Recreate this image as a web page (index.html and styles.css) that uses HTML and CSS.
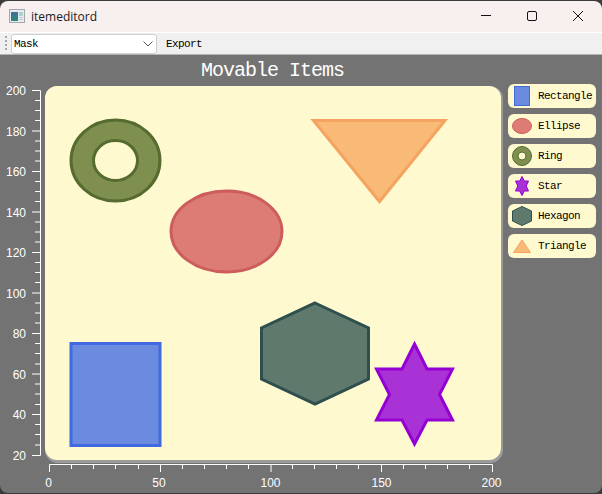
FILE: index.html
```html
<!DOCTYPE html>
<html lang="en">
<head>
<meta charset="utf-8">
<title>itemeditord</title>
<link rel="stylesheet" href="styles.css">
</head>
<body>
<div class="window">
  <header class="titlebar">
    <svg class="app-icon" width="16" height="14" viewBox="0 0 16 14">
      <defs>
        <linearGradient id="app-pane" x1="0" y1="0" x2="0" y2="1">
          <stop offset="0" stop-color="#3f6f9f"/>
          <stop offset="1" stop-color="#2f8a78"/>
        </linearGradient>
      </defs>
      <rect x="0.5" y="0.5" width="15" height="13" fill="#e9ecee" stroke="#a3a8ac"/>
      <rect x="2" y="3" width="7" height="9" fill="url(#app-pane)"/>
      <rect x="10" y="3" width="4" height="4" fill="#a7d6cc"/>
      <rect x="10" y="8" width="4" height="1" fill="#c3ccd0"/>
      <rect x="10" y="10" width="4" height="1" fill="#c3ccd0"/>
    </svg>
    <span class="app-title">itemeditord</span>
    <div class="controls">
      <svg class="control" width="46" height="12" viewBox="0 0 46 12"><path class="glyph" d="M18 5.5H28"/></svg>
      <svg class="control" width="46" height="12" viewBox="0 0 46 12"><rect class="glyph" x="18.5" y="1.5" width="9" height="9" rx="1.5"/></svg>
      <svg class="control" width="46" height="12" viewBox="0 0 46 12"><path class="glyph" d="M18 1L28 11M28 1L18 11"/></svg>
    </div>
  </header>
  <div class="toolbar">
    <span class="grip"></span>
    <div class="combo">
      <span>Mask</span>
      <svg width="10" height="6" viewBox="0 0 10 6"><path class="chevron" d="M0.5 0.5L5 5L9.5 0.5"/></svg>
    </div>
    <span class="tool-button">Export</span>
  </div>
  <main class="main">
    <svg class="chart" width="504" height="438" viewBox="0 55 504 438">
      <text class="chart-title" x="272.5" y="76" text-anchor="middle">Movable Items</text>
      <rect class="plot-shadow" x="45" y="86" width="458" height="377" rx="13"/>
      <rect class="plot" x="45" y="86" width="456" height="374" rx="12"/>

      <path class="axis" d="M32 90.5H40.5V455.5H32M32 131H40M32 171.5H40M32 212H40M32 252.5H40M32 293H40M32 333.5H40M32 374H40M32 414.5H40"/>
      <path class="axis" d="M35 100.5H40M35 110.5H40M35 120.5H40M35 141H40M35 151H40M35 161H40M35 181.5H40M35 191.5H40M35 201.5H40M35 222H40M35 232H40M35 242H40M35 262.5H40M35 272.5H40M35 282.5H40M35 303H40M35 313H40M35 323H40M35 343.5H40M35 353.5H40M35 364H40M35 384H40M35 394H40M35 404.5H40M35 424.5H40M35 434.5H40M35 445H40"/>
      <path class="axis" d="M49.5 472V464.5H492.5V472M160.5 464.5V472M271 464.5V472M381.5 464.5V472"/>
      <path class="axis" d="M71.5 464.5V469M93.5 464.5V469M115.5 464.5V469M138.5 464.5V469M182.5 464.5V469M204.5 464.5V469M226.5 464.5V469M248.5 464.5V469M292.5 464.5V469M314.5 464.5V469M336.5 464.5V469M358.5 464.5V469M403.5 464.5V469M425.5 464.5V469M447.5 464.5V469M469.5 464.5V469"/>

      <g class="tick-label y-label">
        <text x="26" y="95">200</text>
        <text x="26" y="136">180</text>
        <text x="26" y="176">160</text>
        <text x="26" y="217">140</text>
        <text x="26" y="257">120</text>
        <text x="26" y="298">100</text>
        <text x="26" y="338">80</text>
        <text x="26" y="379">60</text>
        <text x="26" y="419">40</text>
        <text x="26" y="460">20</text>
      </g>
      <g class="tick-label x-label">
        <text x="48.5" y="487">0</text>
        <text x="159" y="487">50</text>
        <text x="270.5" y="487">100</text>
        <text x="381.5" y="487">150</text>
        <text x="491.5" y="487">200</text>
      </g>

      <rect class="s-rect" x="71" y="343.5" width="89" height="102"/>
      <path class="s-ring" fill-rule="evenodd" d="M71 160.5a44.5 40.5 0 1 0 89 0a44.5 40.5 0 1 0 -89 0ZM93.5 160.5a22 20 0 1 1 44 0a22 20 0 1 1 -44 0Z"/>
      <ellipse class="s-ellipse" cx="226.5" cy="231.5" rx="55.5" ry="40.5"/>
      <polygon class="s-triangle" points="313.5,120.5 445,120.5 379.5,201.5"/>
      <polygon class="s-hexagon" points="315,303 368.5,328 368.5,379 315,404 261.5,379 261.5,328"/>
      <polygon class="s-star" points="414.5,344 427,369 452.5,369 439.5,394.5 452.5,420 427,420 414.5,444 402,420 376.5,420 389.5,394.5 376.5,369 402,369"/>
    </svg>
    <aside class="legend">
      <div class="legend-item">
        <svg width="24" height="24" viewBox="0 0 24 24"><rect class="s-rect" x="6.5" y="2.5" width="15" height="19"/></svg>
        <span>Rectangle</span>
      </div>
      <div class="legend-item">
        <svg width="24" height="24" viewBox="0 0 24 24"><ellipse class="s-ellipse" cx="14" cy="12" rx="9.5" ry="7.5"/></svg>
        <span>Ellipse</span>
      </div>
      <div class="legend-item">
        <svg width="24" height="24" viewBox="0 0 24 24"><path class="s-ring" fill-rule="evenodd" d="M4.5 12a9.5 9.5 0 1 0 19 0a9.5 9.5 0 1 0 -19 0ZM10 12a4 4 0 1 1 8 0a4 4 0 1 1 -8 0Z"/></svg>
        <span>Ring</span>
      </div>
      <div class="legend-item">
        <svg width="24" height="24" viewBox="0 0 24 24"><polygon class="s-star" points="14,2.5 16.3,7 20.5,7 18.2,12 20.5,17 16.3,17 14,21.5 11.7,17 7.5,17 9.8,12 7.5,7 11.7,7"/></svg>
        <span>Star</span>
      </div>
      <div class="legend-item">
        <svg width="24" height="24" viewBox="0 0 24 24"><polygon class="s-hexagon" points="14,2.5 23.5,7 23.5,17 14,21.5 4.5,17 4.5,7"/></svg>
        <span>Hexagon</span>
      </div>
      <div class="legend-item">
        <svg width="24" height="24" viewBox="0 0 24 24"><polygon class="s-triangle" points="14,6 22.5,18.5 5.5,18.5"/></svg>
        <span>Triangle</span>
      </div>
    </aside>
  </main>
</div>
</body>
</html>
```

FILE: styles.css
```css
* {
  box-sizing: border-box;
}

html,
body {
  margin: 0;
  padding: 0;
  height: 100%;
  overflow: hidden;
  background: #3b3b3b;
}

.window {
  width: 602px;
  height: 494px;
  padding: 1px 0 1px;
  display: flex;
  flex-direction: column;
  font-family: "Liberation Mono", monospace;
}

.titlebar {
  height: 31px;
  flex: none;
  display: flex;
  align-items: center;
  padding-left: 9px;
  background: #f8efef;
  border-radius: 8px 8px 0 0;
}

.app-icon {
  margin-top: -1px;
}

.app-title {
  margin-left: 6px;
  font-family: "Open Sans", sans-serif;
  font-size: 12px;
  color: #1a1a1a;
}

.controls {
  margin-left: auto;
  margin-right: 1px;
  display: flex;
  margin-top: -1px;
}

.control {
  display: block;
}

.glyph {
  fill: none;
  stroke: #111;
  stroke-width: 1;
}

.toolbar {
  height: 23px;
  flex: none;
  display: flex;
  align-items: center;
  padding: 0 0 0 5px;
  background: #f0f0f0;
  border-top: 1px solid #fff;
  border-bottom: 1px solid #b5b5b5;
  font-size: 11px;
  letter-spacing: -0.6px;
  color: #000;
}

.grip {
  width: 2px;
  height: 15px;
  background: repeating-linear-gradient(to bottom, #a8a8a8 0 2px, transparent 2px 4px);
}

.combo {
  width: 146px;
  height: 20px;
  margin-left: 4px;
  padding: 0 3px 0 2px;
  display: flex;
  align-items: center;
  justify-content: space-between;
  background: #fff;
  border: 1px solid #cfcfcf;
  border-radius: 3px;
}

.chevron {
  fill: none;
  stroke: #555;
  stroke-width: 1;
}

.tool-button {
  margin-left: 9px;
}

.main {
  flex: 1;
  min-height: 0;
  display: flex;
  background: #737373;
  border-radius: 0 0 8px 8px;
  overflow: hidden;
}

.chart {
  display: block;
  flex: none;
}

.chart-title {
  font-family: "Liberation Mono", monospace;
  font-size: 20px;
  letter-spacing: -1px;
  fill: #fff;
}

.plot-shadow {
  fill: #9b9b9b;
}

.plot {
  fill: #fff9cf;
}

.axis {
  fill: none;
  stroke: #fff;
  stroke-width: 1;
}

.tick-label {
  font-family: "Liberation Sans", sans-serif;
  font-size: 12px;
  fill: #fff;
}

.y-label {
  text-anchor: end;
}

.x-label {
  text-anchor: middle;
}

.s-rect {
  fill: #6b8bdf;
  stroke: #4169e1;
  stroke-width: 3;
}

.s-ring {
  fill: #7f8f4f;
  stroke: #556b2f;
  stroke-width: 3;
}

.s-ellipse {
  fill: #dd7c74;
  stroke: #cd5c5c;
  stroke-width: 3;
}

.s-triangle {
  fill: #f9b977;
  stroke: #f4a460;
  stroke-width: 3;
}

.s-hexagon {
  fill: #5f7a6d;
  stroke: #2f4f4f;
  stroke-width: 3;
}

.s-star {
  fill: #a832d6;
  stroke: #9400d3;
  stroke-width: 3;
}

.legend {
  margin: 29px 0 0 4px;
  display: flex;
  flex-direction: column;
  gap: 6px;
}

.legend-item {
  width: 88px;
  height: 24px;
  display: flex;
  align-items: center;
  gap: 6px;
  background: #fff9cf;
  border-radius: 6px;
  font-size: 11px;
  letter-spacing: -0.6px;
  color: #000;
}

.legend-item svg {
  display: block;
  flex: none;
}

.legend-item .s-rect,
.legend-item .s-ring,
.legend-item .s-ellipse,
.legend-item .s-triangle,
.legend-item .s-hexagon,
.legend-item .s-star {
  stroke-width: 1;
}
```
